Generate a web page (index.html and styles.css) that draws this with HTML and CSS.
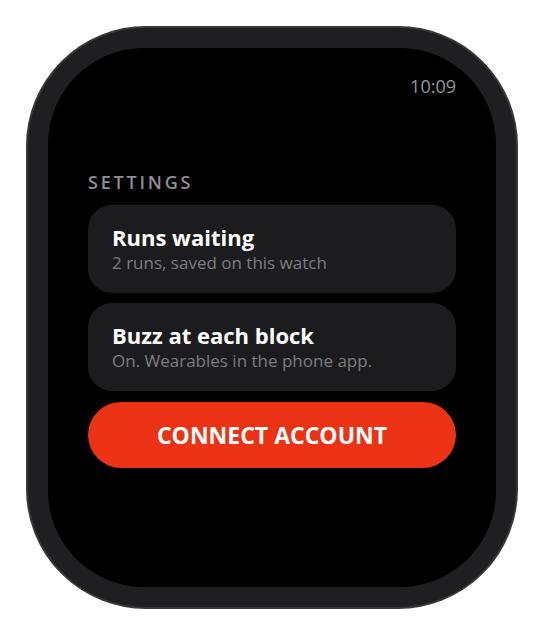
FILE: index.html
```html
<!DOCTYPE html>
<html>
<head>
<meta charset="utf-8">
<link rel="stylesheet" href="styles.css">
</head>
<body>
<div class="watch">
  <div class="screen">
    <div class="status"><span class="time">10:09</span></div>
    <div class="section">SETTINGS</div>
    <div class="card">
      <div class="card-title">Runs waiting</div>
      <div class="card-sub">2 runs, saved on this watch</div>
    </div>
    <div class="card">
      <div class="card-title">Buzz at each block</div>
      <div class="card-sub">On. Wearables in the phone app.</div>
    </div>
    <div class="button">CONNECT ACCOUNT</div>
  </div>
</div>
</body>
</html>
```
FILE: styles.css
```css
html, body {
  margin: 0;
  padding: 0;
  background: #ffffff;
}
body {
  width: 544px;
  height: 636px;
  font-family: "Open Sans", "Noto Sans", sans-serif;
  padding-top: 26px;
  padding-left: 26px;
  box-sizing: border-box;
}
.watch {
  width: 492px;
  height: 583px;
  box-sizing: border-box;
  border: 2px solid #38383b;
  background: #1f1f21;
  border-radius: 120px;
  padding: 20px;
}
.screen {
  width: 100%;
  height: 100%;
  background: #000;
  border-radius: 96px;
  box-sizing: border-box;
  padding: 26px 40px 0 40px;
  display: flex;
  flex-direction: column;
}
.status {
  display: flex;
  justify-content: flex-end;
  height: 24px;
}
.time {
  color: #96969b;
  font-size: 18px;
  line-height: 24px;
}
.section {
  margin-top: 73px;
  color: #8e8e93;
  font-size: 18px;
  font-weight: 600;
  letter-spacing: 2.8px;
  line-height: 22px;
  margin-bottom: 12px;
}
.card {
  background: #1c1c1e;
  border-radius: 24px;
  height: 88px;
  box-sizing: border-box;
  padding: 18px 24px 0 24px;
  margin-bottom: 10px;
}
.card-title {
  color: #fff;
  font-size: 22px;
  font-weight: 700;
  line-height: 28px;
}
.card-sub {
  color: #7d7d82;
  font-size: 17px;
  line-height: 24px;
}
.button {
  margin-top: 1px;
  height: 66px;
  border-radius: 33px;
  background: #ec3214;
  color: #fff;
  font-size: 23px;
  font-weight: 700;
  display: flex;
  align-items: center;
  justify-content: center;
}
```
